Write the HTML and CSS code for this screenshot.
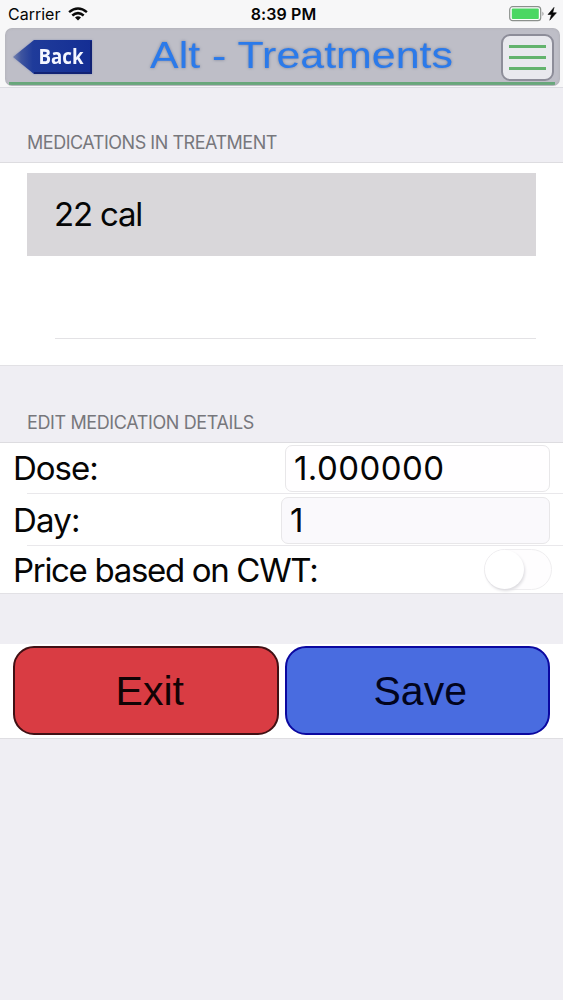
FILE: index.html
```html
<!DOCTYPE html>
<html lang="en">
<head>
<meta charset="utf-8">
<title>Alt - Treatments</title>
<link rel="stylesheet" href="styles.css">
</head>
<body>
<header class="top">
  <div class="status">
    <div class="status-left"><span class="carrier">Carrier</span>
      <svg class="wifi" width="20" height="14" viewBox="0 0 20 14" fill="none" stroke="#0a0a0a" stroke-width="2.5"><path d="M1.1 5.1Q10-2.2 18.9 5.1"/><path d="M4.3 8.5Q10 3.7 15.7 8.5"/><path d="M7 10.6Q10 8 13 10.6L10 13.6Z" fill="#0a0a0a" stroke="none"/></svg>
    </div>
    <span class="clock">8:39 PM</span>
    <svg class="battery" width="49" height="16" viewBox="0 0 49 16"><rect x=".7" y=".7" width="31" height="14" rx="3" fill="#fff" stroke="#8b908c" stroke-width="1.2"/><rect x="2.8" y="2.6" width="27" height="10.4" rx="1" fill="#4bd763"/><path d="M33.5 5.5q2 2.3 0 4.6z" fill="#858585"/><path d="M45 1.4L39 8.5h3.5L40.8 14.2L47.4 6.8h-3.7z" fill="#050505" stroke="#050505" stroke-width=".6"/></svg>
  </div>
  <nav class="bar">
    <svg class="back" width="80" height="34" viewBox="0 0 80 34"><defs><linearGradient id="bg" x2="1"><stop stop-color="#7684b0"/><stop offset=".1" stop-color="#3f559f"/><stop offset=".25" stop-color="#1f3b9a"/><stop offset="1" stop-color="#142e94"/></linearGradient></defs><path d="M0 17L21 0H79V34H21Z" fill="url(#bg)"/><path d="M21 33H78V1" fill="none" stroke="#112274" stroke-width="2"/><text class="back-text" x="25.5" y="23.5" textLength="45" lengthAdjust="spacingAndGlyphs">Back</text></svg>
    <svg class="title" width="320" height="50" viewBox="0 0 320 50"><text class="title-text" x="10" y="35.5" textLength="303" lengthAdjust="spacingAndGlyphs">Alt - Treatments</text></svg>
    <div class="menu"><i></i><i></i><i></i></div>
  </nav>
</header>
<main>
  <h2 class="heading heading-first"><span class="h-a">MEDICATIONS IN TREATMENT</span></h2>
  <section class="list">
    <div class="selected"><span class="cal">22 cal</span></div>
    <div class="empty"></div>
  </section>
  <h2 class="heading heading-second"><span class="h-b">EDIT MEDICATION DETAILS</span></h2>
  <section class="form">
    <div class="row row-dose"><span class="dose">Dose:</span><div class="field field-dose">1.000000</div></div>
    <div class="row row-day"><span class="day">Day:</span><div class="field field-day">1</div></div>
    <div class="row row-price"><span class="price">Price based on CWT:</span><div class="switch"><div class="knob"></div></div></div>
  </section>
  <section class="actions">
    <button class="btn exit">Exit</button>
    <button class="btn save">Save</button>
  </section>
</main>
</body>
</html>
```
FILE: styles.css
```css
* { box-sizing: border-box; }
body { margin: 0; min-height: 1000px; background: #efeef3; color: #050505; font-family: Inter, "Liberation Sans", sans-serif; }
.top { height: 88px; background: #f7f7f8; border-bottom: 1px solid #dcdce2; }
.status { height: 28px; display: grid; grid-template-columns: 1fr auto 1fr; align-items: center; padding: 0 5px 0 8px; }
.status-left { display: flex; align-items: center; gap: 8px; }
.carrier { font-size: 16px; }
.clock { font-size: 16px; font-weight: 600; letter-spacing: .1px; padding-left: 1px; }
.battery { justify-self: end; }
.bar { height: 58px; margin: 0 3px 0 5px; display: flex; align-items: center; border-radius: 7px; background: linear-gradient(#67a77a, #67a77a) 4px 54px / calc(100% - 9px) 3px no-repeat, #bebec7; box-shadow: inset 0 0 3px #a9a9af; }
.back { margin-left: 8px; filter: drop-shadow(0 0 1px #9198b8); }
.back-text { font: bold 21px "Open Sans", sans-serif; fill: #f5f7ff; }
.title { margin-left: 47px; }
.title-text { font: 36px "Liberation Sans", Arial, sans-serif; fill: #2b7aea; filter: drop-shadow(.5px .5px 1.5px #7f8499); }
.menu { width: 53px; height: 47px; margin-left: 41px; display: flex; flex-direction: column; justify-content: center; gap: 8px; padding: 0 6px; border: 2px solid #8d8d99; border-radius: 9px; background: #e9e9ee; flex: none; }
.menu i { height: 3px; background: #63b36d; }
.heading { margin: 0; padding-left: 27px; color: #77777c; font-size: 18px; line-height: 22px; font-weight: 400; display: flex; align-items: flex-end; border-bottom: 1px solid #dddce0; }
.heading-first { height: 75px; padding-bottom: 8px; }
.heading-second { height: 78px; padding-bottom: 8px; border-top: 1px solid #e2e1e5; }
.h-a { letter-spacing: -.47px; }
.h-b { letter-spacing: -.38px; }
.list { height: 202px; padding: 10px 27px 0; background: #fff; }
.selected { height: 83px; display: flex; align-items: center; padding-left: 27px; background: #d9d7da; font-size: 33px; }
.cal { letter-spacing: -1.2px; padding-bottom: 1px; }
.empty { height: 83px; margin-left: 28px; border-bottom: 1px solid #e3e2e5; }
.form { background: #fff; border-bottom: 1px solid #e2e1e5; }
.row { display: flex; align-items: center; justify-content: space-between; padding: 0 13px; font-size: 33px; background: linear-gradient(#e9e8eb, #e9e8eb) 27px 100% / 100% 1px no-repeat; }
.row-dose { height: 51px; }
.row-day { height: 52px; }
.row-price { height: 47px; padding-right: 11px; background: none; }
.field { height: 47px; border: 1px solid #e8e7e9; border-radius: 7px; display: flex; align-items: center; padding-left: 8px; }
.field-dose { width: 265px; background: #fffeff; letter-spacing: .45px; padding-bottom: 2px; }
.field-day { width: 269px; background: #faf9fc; }
.dose { letter-spacing: -1px; padding-bottom: 2px; }
.day { letter-spacing: -.8px; }
.price { letter-spacing: -1.32px; }
.switch { width: 68px; height: 41px; border: 1px solid #efeef0; border-radius: 21px; background: #fefdfe; }
.knob { width: 39px; height: 39px; border-radius: 50%; background: #fff; box-shadow: 1px 2px 3px #dddce0; }
.actions { height: 95px; margin-top: 50px; padding: 2px 13px 0; display: grid; grid-template-columns: 1fr 1fr; gap: 6px; background: #fff; border-bottom: 1px solid #dfdee2; }
.btn { height: 89px; border-radius: 21px; padding: 2px 0 0 8px; font: 41px "Liberation Sans", Arial, sans-serif; }
.exit { background: #d93c43; border: 2px solid #401014; color: #120305; }
.save { background: #496ce0; border: 2px solid #0b08a0; color: #02041d; padding-left: 6px; }
```
